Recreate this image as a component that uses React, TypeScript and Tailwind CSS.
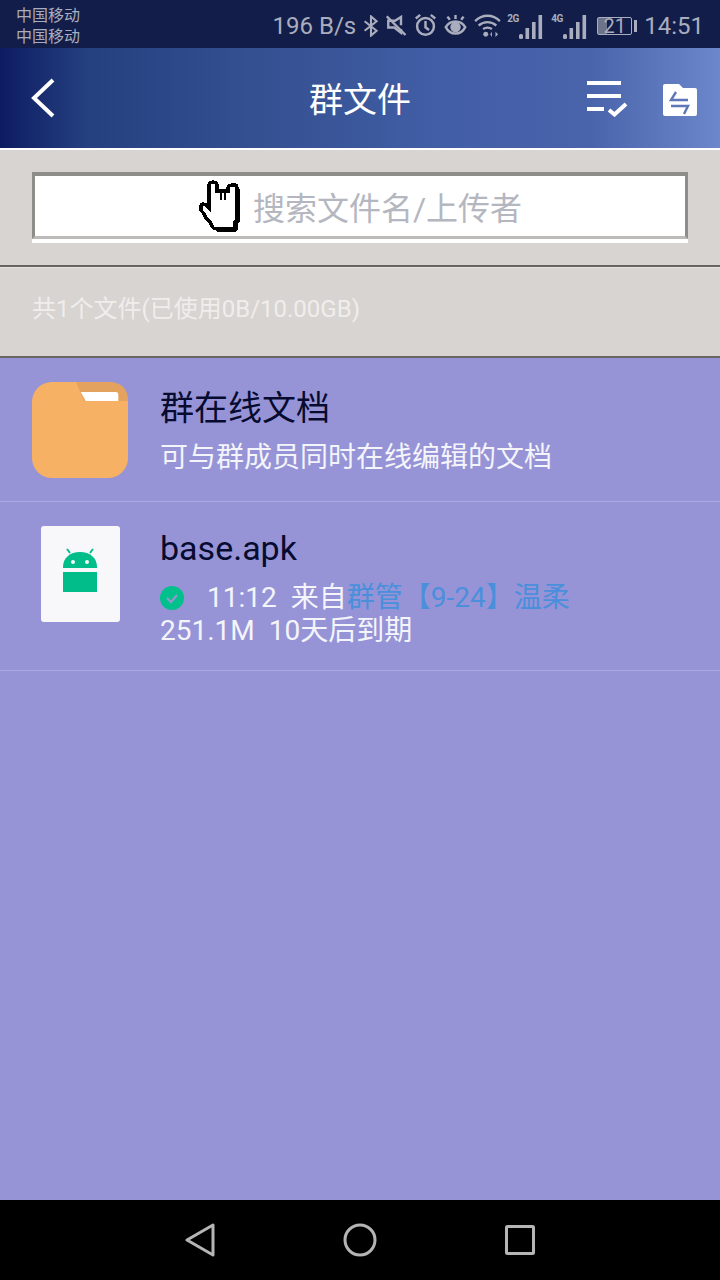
import React from "react";

const cjk = "font-['Roboto','Noto_Sans_CJK_SC',sans-serif]";

function Bars() {
  return (
    <svg width="24" height="24" viewBox="0 0 24 24" fill="#a9adbd" className="self-end">
      <rect x="0" y="19" width="4" height="5" rx="1.5" />
      <rect x="6.5" y="13" width="3.6" height="11" />
      <rect x="13" y="7" width="3.6" height="17" />
      <rect x="19.5" y="0" width="3.6" height="24" />
    </svg>
  );
}

function StatusIcons() {
  return (
    <div className="flex items-center">
      <svg width="16" height="22" viewBox="0 0 20 26" fill="none" stroke="#a9adbd" strokeWidth="2.6" className="ml-[7px]">
        <path d="M2 7l15 12-7 6V1l7 6L2 19" />
      </svg>
      <svg width="21" height="22" viewBox="0 0 28 28" fill="none" stroke="#a9adbd" strokeWidth="3.2" className="ml-[7px]">
        <path d="M1 1l25 25" />
        <path d="M20 13V2l-8 5H3v9h8l9 7v-5" />
      </svg>
      <svg width="23" height="25" viewBox="0 0 26 28" fill="none" stroke="#a9adbd" strokeWidth="2.8" className="ml-[7px]">
        <circle cx="13" cy="15" r="9.5" />
        <path d="M13 9v7l4 3" />
        <path d="M2 6l5-4M24 6l-5-4" />
      </svg>
      <svg width="23" height="21" viewBox="0 0 28 26" fill="none" stroke="#a9adbd" strokeWidth="3" className="ml-[7px]">
        <path d="M2 15c3-5 7-7 12-7s9 2 12 7c-3 6-7 8-12 8s-9-2-12-8z" />
        <circle cx="14" cy="15" r="5" fill="#a9adbd" />
        <path d="M7 6L4 2M14 5V0M21 6l3-4" />
      </svg>
      <svg width="27" height="23" viewBox="0 0 30 26" fill="none" stroke="#a9adbd" strokeWidth="2.6" className="ml-[7px]">
        <path d="M1 8c8-8 20-8 28 0M5 13c6-5 14-5 20 0M10 17c3-2 7-2 10 0" />
        <circle cx="13" cy="23" r="2.8" fill="#a9adbd" stroke="none" />
        <path d="M20 20l-2 3 2 3zM24 20l3 3-3 3z" fill="#a9adbd" stroke="none" />
      </svg>
      <div className="ml-[6px] flex h-[26px] items-start">
        <span className="w-[12px] text-[10px] leading-[12px] font-bold tracking-tighter text-[#a9adbd]">2G</span>
        <Bars />
      </div>
      <div className="ml-[8px] flex h-[26px] items-start">
        <span className="w-[12px] text-[10px] leading-[12px] font-bold tracking-tighter text-[#a9adbd]">4G</span>
        <Bars />
      </div>
      <div className="ml-[10px] flex items-center">
        <div className="flex h-[18px] w-[35px] items-center justify-center rounded-[2px] border-[1.5px] border-[#a9adbd] bg-[linear-gradient(90deg,#6d7389_0,#6d7389_28%,transparent_28%)] text-[20px] leading-none text-[#a9adbd]">
          21
        </div>
        <div className="ml-[2px] h-[12px] w-[3px] bg-[#a9adbd]" />
      </div>
    </div>
  );
}

function HandCursor() {
  return (
    <svg width="44" height="52" viewBox="0 0 44 52" shapeRendering="crispEdges" className="shrink-0">
      <path
        d="M11 22V5q0-3 4-3t4 3v6h11V8q0-3 4-3h3q2 0 2 3v32l-2 2v4q0 3-4 3H19q-4 0-5-3l-2-4-4-4-2-4-3-4v-4q0-2 2-2l3 1 3 3z"
        fill="#fff"
        stroke="#000"
        strokeWidth="3.2"
      />
      <path d="M40 9v31l-2 3v4q0 4-5 4H19" fill="none" stroke="#000" strokeWidth="4.500" />
      <path d="M23 11v9M27 11v9" stroke="#000" strokeWidth="2" />
    </svg>
  );
}

function FolderIcon() {
  return (
    <svg width="96" height="96" viewBox="0 0 96 96" className="shrink-0">
      <rect width="96" height="96" rx="20" fill="#f6b164" />
      <path d="M44 0h32q20 0 20 19H52z" fill="#e3a35f" />
      <path d="M48.7 10H84q2.300 0 2.300 3v6H53.700z" fill="#fff" />
    </svg>
  );
}

function ApkIcon() {
  return (
    <svg width="80" height="96" viewBox="0 0 80 96" className="shrink-0">
      <path d="M3 0h73q3 0 3 3v90q0 3-3 3H3q-3 0-3-3V3q0-3 3-3z" fill="#f8f8fa" />
      <path d="M22 42v-1c0-9 7-15 17-15s17 6 17 15v1z" fill="#00bd8a" />
      <path d="M26 23l3 4M52 23l-3 4" stroke="#00bd8a" strokeWidth="2" />
      <circle cx="32" cy="36" r="2" fill="#f8f8fa" />
      <circle cx="46" cy="36" r="2" fill="#f8f8fa" />
      <rect x="22" y="46" width="34" height="20" fill="#00bd8a" />
    </svg>
  );
}

export default function App() {
  return (
    <div className={`flex h-[1280px] w-[720px] flex-col overflow-hidden bg-[#9694d6] ${cjk}`}>
      <div className="flex h-[48px] shrink-0 items-center justify-between bg-[#121e49] px-[16px] pt-[3px]">
        <div className="flex flex-col text-[16px] leading-[21px] text-[#a9adbd]">
          <span>中国移动</span>
          <span>中国移动</span>
        </div>
        <div className="flex items-center">
          <span className="text-[24px] text-[#a9adbd]">196 B/s</span>
          <StatusIcons />
          <span className="ml-[7px] text-[24px] text-[#a9adbd]">14:51</span>
        </div>
      </div>

      <header className="flex h-[100px] shrink-0 items-center justify-between bg-[linear-gradient(90deg,#0d1c62_0,#24407f_12%,#345090_35%,#425ea6_62%,#4a64ab_82%,#6c87cb_100%)] pr-[23px] pl-[30px]">
        <svg width="26" height="40" viewBox="0 0 26 40" fill="none" stroke="#fff" strokeWidth="4">
          <path d="M23 2L4 20l19 18" />
        </svg>
        <h1 className="mt-[4px] ml-[77px] text-[34px] leading-none font-normal text-white">群文件</h1>
        <div className="flex items-center gap-[35px]">
          <svg width="41" height="38" viewBox="0 0 41 38" fill="none" stroke="#fff" strokeWidth="4">
            <path d="M0 4h34M0 17h34M0 30h17" />
            <path d="M22 31l5.500 4.500L39 25" />
          </svg>
          <svg width="34" height="32" viewBox="0 0 34 32" className="mt-[4px]">
            <path d="M2 0h14l4 4h12q2 0 2 2v24q0 2-2 2H2q-2 0-2-2V2q0-2 2-2z" fill="#fff" />
            <path d="M13 8l-5 8h17M21 30l4-8H8" fill="none" stroke="#5f76b8" strokeWidth="2.4" />
          </svg>
        </div>
      </header>

      <div className="flex h-[119px] shrink-0 flex-col justify-center border-t-2 border-b-2 border-t-white border-b-[#676461] bg-[#d8d4d1] px-[32px]">
        <div className="flex h-[71px] flex-col bg-white">
          <div className="flex h-[67px] items-center justify-center border-x-[3px] border-t-[4px] border-b-[3px] border-x-[#8f8d8a] border-t-[#8f8d8a] border-b-[#bdbbb9]">
            <HandCursor />
            <span className="mt-[6px] ml-[11px] text-[32px] leading-none text-[#b4b6c0]">搜索文件名/上传者</span>
          </div>
        </div>
      </div>

      <div className="flex h-[91px] shrink-0 items-center border-t border-t-[#e6e3e1] border-b-2 border-b-[#676461] bg-[#d8d4d1] px-[32px] pb-[6px]">
        <span className="text-[24px] leading-none text-[#f0eeec]">共1个文件(已使用0B/10.00GB)</span>
      </div>

      <main className="flex flex-1 flex-col">
        <div className="flex h-[144px] items-start border-b border-b-[#aaa9e0] pt-[24px] pl-[32px]">
          <FolderIcon />
          <div className="mt-[1px] ml-[32px] flex flex-col">
            <span className="text-[34px] leading-[50px] text-[#070b30]">群在线文档</span>
            <span className="mt-[3px] text-[28px] leading-[44px] text-[#f4f4fb]">可与群成员同时在线编辑的文档</span>
          </div>
        </div>
        <div className="flex h-[169px] items-start border-b border-b-[#aaa9e0] pt-[24px] pl-[41px]">
          <ApkIcon />
          <div className="ml-[39px] flex flex-col">
            <span className="text-[34px] leading-[44px] text-[#070b30]">base.apk</span>
            <div className="mt-[11px] flex h-[34px] items-center text-[28px] leading-none text-[#f4f4fb]">
              <svg width="24" height="24" viewBox="0 0 24 24" className="shrink-0">
                <circle cx="12" cy="12" r="12" fill="#00c08b" />
                <path d="M7 12l4 4 6-7" fill="none" stroke="#8f98cc" strokeWidth="2.4" />
              </svg>
              <span className="ml-[23px]">11:12</span>
              <span className="ml-[14px]">来自</span>
              <span className="text-[#4a8fdc]">群管【9-24】温柔</span>
            </div>
            <span className="text-[28px] leading-[32px] text-[#f4f4fb]">251.1M&nbsp;&nbsp;10天后到期</span>
          </div>
        </div>
      </main>

      <nav className="flex h-[80px] shrink-0 items-center justify-center gap-[128px] bg-black">
        <svg width="30" height="36" viewBox="0 0 30 36" fill="none" stroke="#b5b5b5" strokeWidth="3" strokeLinejoin="round">
          <path d="M28 3v30L2 18z" />
        </svg>
        <svg width="34" height="34" viewBox="0 0 34 34" fill="none" stroke="#b5b5b5" strokeWidth="3">
          <circle cx="17" cy="17" r="15" />
        </svg>
        <svg width="30" height="30" viewBox="0 0 30 30" fill="none" stroke="#b5b5b5" strokeWidth="3" strokeLinejoin="round">
          <rect x="1.5" y="1.5" width="27" height="27" rx="1" />
        </svg>
      </nav>
    </div>
  );
}
